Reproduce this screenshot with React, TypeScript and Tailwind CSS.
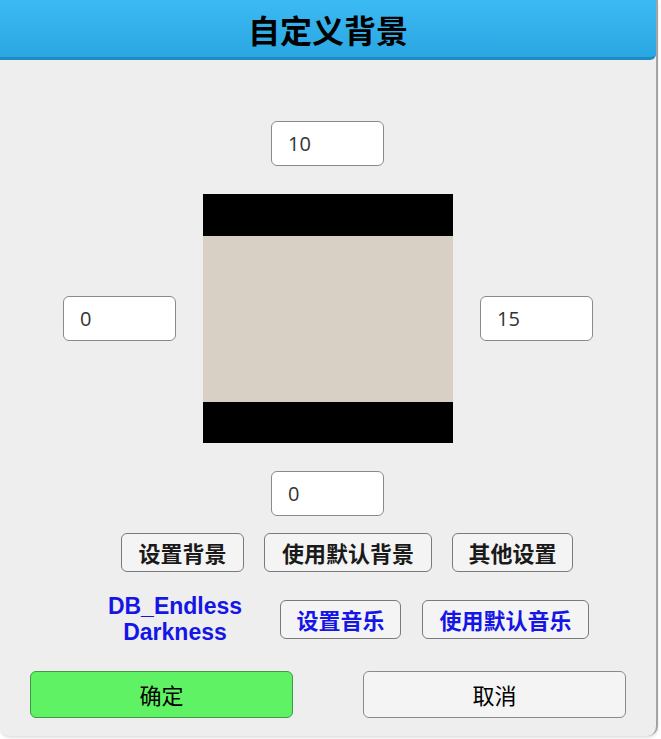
import { ReactNode } from "react";

const cjk = "font-['Noto_Sans_CJK_SC','Noto_Sans',sans-serif]";

function NumberBox({ value, className = "" }: { value: string; className?: string }) {
  return (
    <div
      className={`flex h-[45px] w-[113px] items-center rounded-[6px] border border-[#8a8a8a] bg-white pl-[16px] font-['Open_Sans',sans-serif] text-[20px] text-[#333] ${className}`}
    >
      {value}
    </div>
  );
}

function ToolButton({ children, width, blue }: { children: ReactNode; width: string; blue?: boolean }) {
  return (
    <div
      className={`flex h-[39px] items-center justify-center rounded-[6px] border border-[#7a7a7a] bg-[#f4f4f4] text-[22px] font-bold ${cjk} ${width} ${
        blue ? "text-[#1515e6]" : "text-[#1a1a1a]"
      }`}
    >
      {children}
    </div>
  );
}

export default function App() {
  return (
    <div className="h-[739px] w-[661px] overflow-hidden bg-white">
      <div className="flex h-[736px] w-[658px] flex-col rounded-b-[10px] border-r-2 border-[#a3a3a3] bg-[#eeeeee] shadow-[0_2px_3px_rgba(0,0,0,0.12)]">
        <div className="flex h-[60px] shrink-0 items-center justify-center rounded-br-[6px] border-b-[3px] border-[#1f8cc2] bg-gradient-to-b from-[#3cbaf3] to-[#2aa6e2]">
          <h1 className={`text-[32px] font-bold leading-none text-black ${cjk}`}>自定义背景</h1>
        </div>

        <div className="flex flex-col pt-[61px]">
          <NumberBox value="10" className="ml-[271px]" />

          <div className="mt-[28px] flex items-center pl-[63px]">
            <NumberBox value="0" />
            <div className="ml-[27px] flex h-[249px] w-[250px] flex-col">
              <div className="h-[42px] bg-black" />
              <div className="flex-1 bg-[#d9d0c5]" />
              <div className="h-[41px] bg-black" />
            </div>
            <NumberBox value="15" className="ml-[27px]" />
          </div>

          <NumberBox value="0" className="ml-[271px] mt-[28px]" />

          <div className="mt-[17px] flex gap-[20px] pl-[121px]">
            <ToolButton width="w-[123px]">设置背景</ToolButton>
            <ToolButton width="w-[168px]">使用默认背景</ToolButton>
            <ToolButton width="w-[121px]">其他设置</ToolButton>
          </div>

          <div className="mt-[21px] flex items-center">
            <div className="w-[280px] pl-[90px] pr-[20px] text-center font-['Liberation_Sans',Arial,sans-serif] text-[23px] font-bold leading-[26px] text-[#1515e6]">
              DB_Endless
              <br />
              Darkness
            </div>
            <ToolButton width="w-[121px]" blue>
              设置音乐
            </ToolButton>
            <div className="w-[21px]" />
            <ToolButton width="w-[167px]" blue>
              使用默认音乐
            </ToolButton>
          </div>

          <div className="mt-[26px] flex gap-[70px] pl-[30px]">
            <div
              className={`flex h-[47px] w-[263px] items-center justify-center rounded-[6px] border border-[#3f9a43] bg-[#5ff264] text-[22px] text-black ${cjk}`}
            >
              确定
            </div>
            <div
              className={`flex h-[47px] w-[263px] items-center justify-center rounded-[6px] border border-[#8a8a8a] bg-[#f4f4f4] text-[22px] text-black ${cjk}`}
            >
              取消
            </div>
          </div>
        </div>
      </div>
    </div>
  );
}
